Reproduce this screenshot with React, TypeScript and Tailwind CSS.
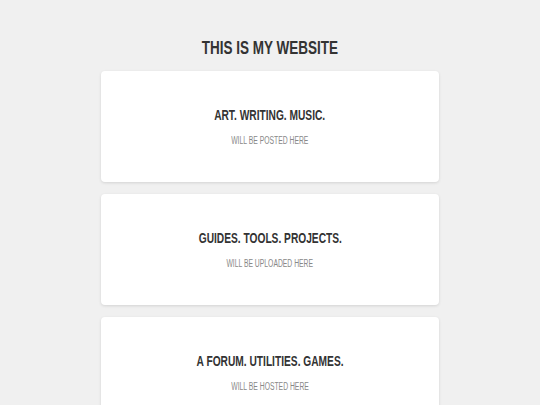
export default function App() {
  const cards = [
    { title: 'ART. WRITING. MUSIC.', sub: 'WILL BE POSTED HERE' },
    { title: 'GUIDES. TOOLS. PROJECTS.', sub: 'WILL BE UPLOADED HERE' },
    { title: 'A FORUM. UTILITIES. GAMES.', sub: 'WILL BE HOSTED HERE' },
  ];

  return (
    <div
      className="h-screen overflow-hidden bg-[#f0f0f0] flex flex-col items-center pt-[36px]"
      style={{ fontFamily: '"Liberation Sans", Arial, sans-serif' }}
    >
      <h1 className="text-[19px] leading-[24px] font-bold text-[#333] scale-x-[0.71]">THIS IS MY WEBSITE</h1>
      <div className="mt-[11px] flex flex-col gap-[12px] w-[338px] shrink-0">
        {cards.map((c) => (
          <div
            key={c.title}
            className="bg-white rounded-[4px] shadow-[0_1px_3px_rgba(0,0,0,0.12)] h-[111px] shrink-0 flex flex-col items-center justify-center"
          >
            <h2 className="text-[15px] leading-[18px] font-bold text-[#333] scale-x-[0.68] whitespace-nowrap">{c.title}</h2>
            <p className="mt-[11px] text-[10px] leading-[12px] text-[#888] scale-x-[0.68] whitespace-nowrap">{c.sub}</p>
          </div>
        ))}
      </div>
    </div>
  );
}
